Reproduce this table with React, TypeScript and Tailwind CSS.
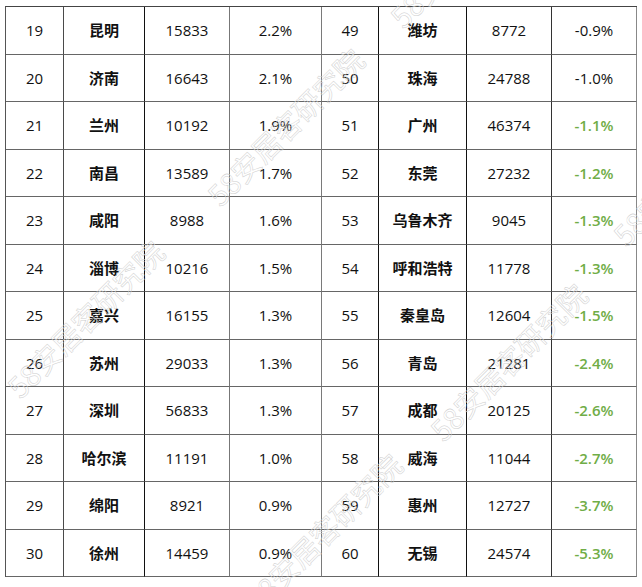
import React from "react";

type Row = [string, string, string, string, string, string, string, string];

const rows: Row[] = [
  ["19", "昆明", "15833", "2.2%", "49", "潍坊", "8772", "-0.9%"],
  ["20", "济南", "16643", "2.1%", "50", "珠海", "24788", "-1.0%"],
  ["21", "兰州", "10192", "1.9%", "51", "广州", "46374", "-1.1%"],
  ["22", "南昌", "13589", "1.7%", "52", "东莞", "27232", "-1.2%"],
  ["23", "咸阳", "8988", "1.6%", "53", "乌鲁木齐", "9045", "-1.3%"],
  ["24", "淄博", "10216", "1.5%", "54", "呼和浩特", "11778", "-1.3%"],
  ["25", "嘉兴", "16155", "1.3%", "55", "秦皇岛", "12604", "-1.5%"],
  ["26", "苏州", "29033", "1.3%", "56", "青岛", "21281", "-2.4%"],
  ["27", "深圳", "56833", "1.3%", "57", "成都", "20125", "-2.6%"],
  ["28", "哈尔滨", "11191", "1.0%", "58", "威海", "11044", "-2.7%"],
  ["29", "绵阳", "8921", "0.9%", "59", "惠州", "12727", "-3.7%"],
  ["30", "徐州", "14459", "0.9%", "60", "无锡", "24574", "-5.3%"],
];

const colBorder = [
  "border-r-[#4a4a4a]",
  "border-r-[#111]",
  "border-r-[#777]",
  "border-r-[#7a7a7a]",
  "border-r-[#111]",
  "border-r-[#111]",
  "border-r-[#333]",
  "border-r-[#888]",
];

const watermarks: { x: number; y: number }[] = [
  { x: 395, y: 22 },
  { x: 212, y: 200 },
  { x: 12, y: 392 },
  { x: 435, y: 435 },
  { x: 618, y: 240 },
  { x: 250, y: 605 },
];

export default function App() {
  return (
    <div className="relative w-[642px] h-[587px] overflow-hidden bg-white">
      <div className="ml-[5px] mt-[6px] w-[632px] border-l border-t border-l-[#555] border-t-[#444] grid grid-cols-[58px_81px_85px_92px_57px_88px_85px_85px] font-['Open_Sans','Noto_Sans_CJK_SC',sans-serif] text-[15px] text-[#111]">
        {rows.map((r, i) =>
          r.map((c, j) => {
            const isName = j === 1 || j === 5;
            const isGreen = j === 7 && i >= 2;
            return (
              <div
                key={`${i}-${j}`}
                className={`flex items-center justify-center border-r border-b border-b-[#666] ${colBorder[j]} ${
                  i % 2 === 0 ? "h-[48px]" : "h-[47px]"
                } ${
                  isName
                    ? "font-['Noto_Sans_CJK_SC',sans-serif] font-bold"
                    : ""
                } ${isGreen ? "text-[#70ad47] font-semibold" : ""}`}
              >
                {c}
              </div>
            );
          })
        )}
      </div>
      {watermarks.map((w, k) => (
        <div
          key={k}
          className="absolute origin-left -rotate-45 whitespace-nowrap pointer-events-none font-['Noto_Sans_CJK_SC',sans-serif] text-[29px] leading-none text-transparent [-webkit-text-stroke:0.5px_#cfcfcf]"
          style={{ left: w.x, top: w.y - 15 }}
        >
          58安居客研究院
        </div>
      ))}
    </div>
  );
}
